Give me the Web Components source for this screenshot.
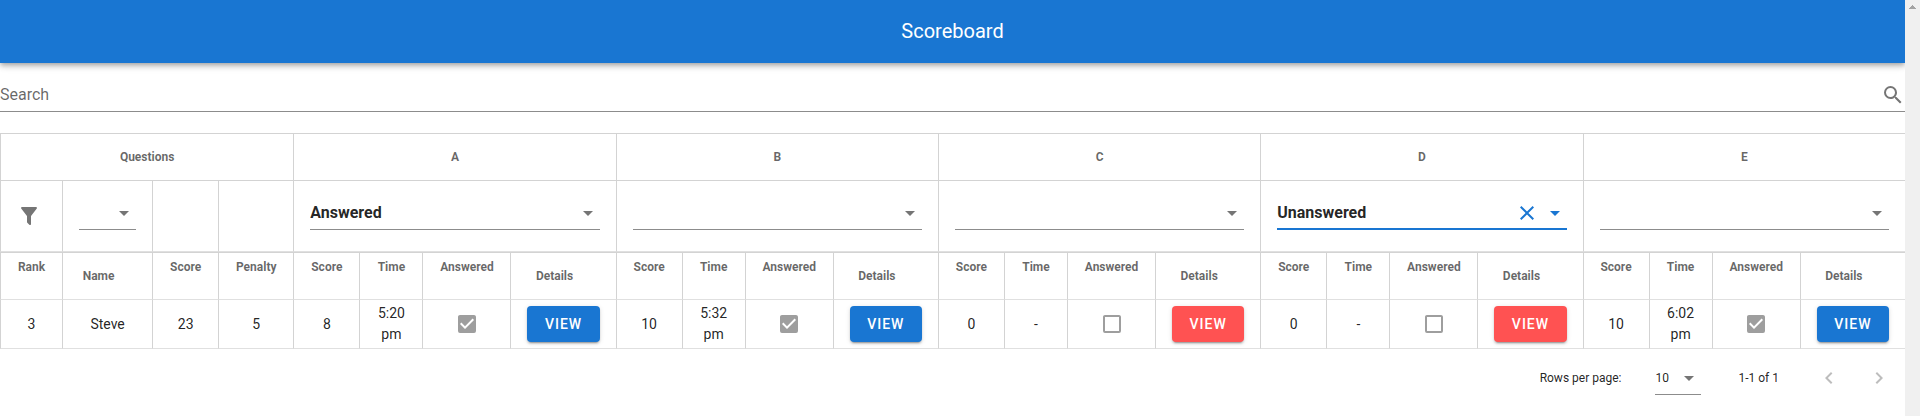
<!DOCTYPE html>
<html lang="en">
<head>
<meta charset="utf-8">
<title>Scoreboard</title>
<style>
  body { margin: 0; background: #fff; font-family: Roboto, "Liberation Sans", sans-serif; color: rgba(0,0,0,.87); }
</style>
</head>
<body>
<score-page>
  <app-bar>Scoreboard</app-bar>
  <search-field></search-field>
  <score-table></score-table>
  <table-pager></table-pager>
</score-page>

<script>
const define = (name, html, setup) => {
  const template = document.createElement('template');
  template.innerHTML = html;
  customElements.define(name, class extends HTMLElement {
    constructor() {
      super();
      this.attachShadow({ mode: 'open' });
    }
    connectedCallback() {
      if (this.shadowRoot.childNodes.length) return;
      this.shadowRoot.append(template.content.cloneNode(true));
      if (setup) setup(this, this.shadowRoot);
    }
  });
};

define('scroll-rail', `
<style>
  :host { display: block; width: 15px; background: #f0f0f0; }
  svg { display: block; }
</style>
<svg width="15" height="15" viewBox="0 0 15 15" aria-hidden="true"><path fill="#a3a3a3" d="M7 5h1v1h1v1h1v1h1v1H4V8h1V7h1V6h1z"/></svg>`);

define('score-page', `
<style>
  :host { display: flex; min-height: 100vh; }
  main { flex: 1; min-width: 0; display: flex; flex-direction: column; }
</style>
<main><slot></slot></main>
<scroll-rail></scroll-rail>`);

define('app-bar', `
<style>
  :host { display: block; background: #1976d2; color: #fff;
    box-shadow: 0 2px 4px -1px rgba(0,0,0,.2), 0 4px 5px 0 rgba(0,0,0,.14), 0 1px 10px 0 rgba(0,0,0,.12); clip-path: inset(0 0 -20px 0); }
  h1 { margin: 0; font-size: 20px; line-height: 63px; font-weight: 400; text-align: center; }
</style>
<header><h1><slot></slot></h1></header>`);

define('search-field', `
<style>
  :host { display: block; padding: 16px 0 21px; }
  label { display: flex; align-items: flex-start; height: 32px; border-bottom: 1px solid #8c8c8c; }
  input { flex: 1; min-width: 0; border: 0; outline: 0; padding: 0; background: none; font: inherit; font-size: 16px; height: 30px; }
  input::placeholder { color: rgba(0,0,0,.6); opacity: 1; }
  svg { fill: #757575; margin-top: 4px; }
</style>
<label>
  <input type="text" placeholder="Search" aria-label="Search">
  <svg width="24" height="24" viewBox="0 0 24 24" aria-hidden="true"><path d="M9.5,3A6.5,6.5 0 0,1 16,9.5C16,11.11 15.41,12.59 14.44,13.73L14.71,14H15.5L20.5,19L19,20.5L14,15.5V14.71L13.73,14.44C12.59,15.41 11.11,16 9.5,16A6.5,6.5 0 0,1 3,9.5A6.5,6.5 0 0,1 9.5,3M9.5,5C7,5 5,7 5,9.5C5,12 7,14 9.5,14C12,14 14,12 14,9.5C14,7 12,5 9.5,5Z"/></svg>
</label>`);

define('filter-select', `
<style>
  :host { display: block; color: rgba(0,0,0,.87); --tone: #757575; }
  :host([active]) { --tone: #1976d2; }
  div { display: grid; grid-template-columns: 1fr auto 24px; align-items: center; height: 32px; border-bottom: 1px solid #8c8c8c; }
  :host([active]) div { height: 31px; border-bottom: 2px solid #1976d2; }
  select { grid-area: 1 / 1 / 2 / 4; appearance: none; width: 100%; height: 31px; margin: 0; padding: 0; border: 0; outline: 0; background: none; color: inherit; font: inherit; font-size: 16px; font-weight: 700; }
  button { grid-area: 1 / 2; display: none; margin: 0 4px 0 0; padding: 0; border: 0; background: none; height: 24px; }
  :host([active]) button { display: block; }
  .arrow { grid-area: 1 / 3; pointer-events: none; }
  svg { display: block; fill: var(--tone); }
</style>
<div>
  <select></select>
  <button type="button" aria-label="Clear filter"><svg width="24" height="24" viewBox="0 0 24 24"><path d="M19,6.41L17.59,5L12,10.59L6.41,5L5,6.41L10.59,12L5,17.59L6.41,19L12,13.41L17.59,19L19,17.59L13.41,12L19,6.41Z"/></svg></button>
  <svg class="arrow" width="24" height="24" viewBox="0 0 24 24" aria-hidden="true"><path d="M7,10L12,15L17,10H7Z"/></svg>
</div>`, (host, root) => {
  const select = root.querySelector('select');
  select.setAttribute('aria-label', host.getAttribute('label'));
  const options = (host.getAttribute('options') || '').split(',');
  for (const text of ['', ...options]) select.add(new Option(text, text));
  select.value = host.getAttribute('value') || '';
  root.querySelector('button').addEventListener('click', () => { select.value = ''; });
});

define('tick-box', `
<style>
  :host { display: grid; width: 24px; height: 24px; margin: 0 auto; }
  input, svg { grid-area: 1 / 1; }
  input { appearance: none; margin: 0; width: 24px; height: 24px; }
  svg { fill: #9e9e9e; pointer-events: none; }
  .on, input:checked ~ .off { display: none; }
  input:checked ~ .on { display: block; }
</style>
<input type="checkbox" aria-label="Answered" disabled>
<svg class="off" width="24" height="24" viewBox="0 0 24 24"><path d="M19,3H5C3.89,3 3,3.89 3,5V19A2,2 0 0,0 5,21H19A2,2 0 0,0 21,19V5C21,3.89 20.1,3 19,3M19,5V19H5V5H19Z"/></svg>
<svg class="on" width="24" height="24" viewBox="0 0 24 24"><path d="M10,17L5,12L6.41,10.58L10,14.17L17.59,6.58L19,8M19,3H5C3.89,3 3,3.89 3,5V19A2,2 0 0,0 5,21H19A2,2 0 0,0 21,19V5C21,3.89 20.1,3 19,3Z"/></svg>`,
(host, root) => { root.querySelector('input').checked = host.hasAttribute('checked'); });

define('view-button', `
<style>
  :host { display: block; --fill: #1976d2; }
  :host([tone="error"]) { --fill: #ff5252; }
  button { display: block; width: 100%; height: 36px; padding: 0; border: 0; border-radius: 4px; background: var(--fill); color: #fff;
    font: inherit; font-size: 14px; font-weight: 500; letter-spacing: 1px; text-transform: uppercase;
    box-shadow: 0 3px 1px -2px rgba(0,0,0,.2), 0 2px 2px 0 rgba(0,0,0,.14), 0 1px 5px 0 rgba(0,0,0,.12); }
</style>
<button type="button"><slot></slot></button>`);

define('score-table', `
<style>
  :host { display: block; }
  table { width: 100%; table-layout: fixed; border-collapse: separate; border-spacing: 0; text-align: center; }
  .rank { width: 62px; } .name { width: 90px; } .total { width: 66px; } .penalty { width: 75px; }
  .score { width: 66px; } .time { width: 63px; } .answered { width: 88px; } .details { width: 105px; }
  th, td { box-sizing: border-box; padding: 0 16px; border: 0 solid #d3d3d3; border-left-width: 1px; }
  th { height: 48px; border-top-width: 1px; font-size: 12px; line-height: 18px; font-weight: 700; color: rgba(0,0,0,.6); }
  .groups th { height: 47px; }
  .filters th { height: 72px; padding-top: 16px; vertical-align: top; border-bottom: 1px solid #e0e0e0; }
  .filters .icon { padding-top: 23px; }
  .labels th { border-bottom: 1px solid #e0e0e0; padding-bottom: 18px; }
  .labels .wide { padding-right: 34px; padding-bottom: 0; }
  td { height: 49px; border-bottom: 1px solid #e0e0e0; font-size: 14px; line-height: 21px; }
  .icon svg { display: block; fill: #757575; }
</style>
<table>
  <colgroup><col class="rank"><col class="name"><col class="total"><col class="penalty"></colgroup>
  <thead>
    <tr class="groups"><th colspan="4">Questions</th></tr>
    <tr class="filters">
      <th class="icon"><svg width="24" height="24" viewBox="0 0 24 24" role="img" aria-label="Filters"><path d="M14,12V19.88C14.04,20.18 13.94,20.5 13.71,20.71C13.32,21.1 12.69,21.1 12.3,20.71L10.29,18.7C10.06,18.47 9.96,18.16 10,17.87V12H9.97L4.21,4.62C3.87,4.19 3.95,3.56 4.38,3.22C4.57,3.08 4.78,3 5,3V3H19V3C19.22,3 19.43,3.08 19.62,3.22C20.05,3.56 20.13,4.19 19.79,4.62L14.03,12H14Z"/></svg></th>
      <th><filter-select label="Name"></filter-select></th><th></th><th></th>
    </tr>
    <tr class="labels"><th>Rank</th><th class="wide">Name</th><th>Score</th><th>Penalty</th></tr>
  </thead>
  <tbody><tr class="row"><td>3</td><td>Steve</td><td>23</td><td>5</td></tr></tbody>
</table>`, (host, root) => {
  const questions = [
    { id: 'A', filter: 'Answered', score: 8, time: '5:20 pm', done: true },
    { id: 'B', filter: '', score: 10, time: '5:32 pm', done: true },
    { id: 'C', filter: '', score: 0, time: '-', done: false },
    { id: 'D', filter: 'Unanswered', score: 0, time: '-', done: false, active: true },
    { id: 'E', filter: '', score: 10, time: '6:02 pm', done: true },
  ];
  const add = (selector, html) => root.querySelector(selector).insertAdjacentHTML('beforeend', html);
  for (const q of questions) {
    add('colgroup', '<col class="score"><col class="time"><col class="answered"><col class="details">');
    add('.groups', `<th colspan="4">${q.id}</th>`);
    add('.filters', `<th colspan="4"><filter-select label="${q.id}" options="Answered,Unanswered" value="${q.filter}"${q.active ? ' active' : ''}></filter-select></th>`);
    add('.labels', '<th>Score</th><th>Time</th><th>Answered</th><th class="wide">Details</th>');
    add('.row', `<td>${q.score}</td><td>${q.time}</td><td><tick-box${q.done ? ' checked' : ''}></tick-box></td><td><view-button${q.done ? '' : ' tone="error"'}>View</view-button></td>`);
  }
});

define('table-pager', `
<style>
  :host { display: block; }
  footer { display: flex; align-items: center; justify-content: flex-end; height: 58px; padding: 0 8px; font-size: 12px; }
  label { display: flex; align-items: center; gap: 34px; }
  .size { display: grid; grid-template-columns: 1fr 24px; align-items: center; width: 46px; height: 32px; border-bottom: 1px solid #8c8c8c; }
  select { grid-area: 1 / 1 / 2 / 3; appearance: none; width: 100%; height: 32px; padding: 0; border: 0; background: none; color: inherit; font: inherit; }
  .size svg { grid-area: 1 / 2; fill: #757575; pointer-events: none; }
  .range { margin: 0 32px 0 37px; }
  nav { display: flex; gap: 14px; }
  button { width: 36px; height: 36px; padding: 6px; border: 0; background: none; }
  button svg { display: block; fill: #bdbdbd; }
</style>
<footer>
  <label>Rows per page:
    <span class="size">
      <select><option>5</option><option selected>10</option><option>15</option></select>
      <svg width="24" height="24" viewBox="0 0 24 24" aria-hidden="true"><path d="M7,10L12,15L17,10H7Z"/></svg>
    </span>
  </label>
  <span class="range">1-1 of 1</span>
  <nav aria-label="Pages">
    <button type="button" disabled aria-label="Previous page"><svg width="24" height="24" viewBox="0 0 24 24"><path d="M15.41,16.58L10.83,12L15.41,7.41L14,6L8,12L14,18L15.41,16.58Z"/></svg></button>
    <button type="button" disabled aria-label="Next page"><svg width="24" height="24" viewBox="0 0 24 24"><path d="M8.59,16.58L13.17,12L8.59,7.41L10,6L16,12L10,18L8.59,16.58Z"/></svg></button>
  </nav>
</footer>`);
</script>
</body>
</html>
